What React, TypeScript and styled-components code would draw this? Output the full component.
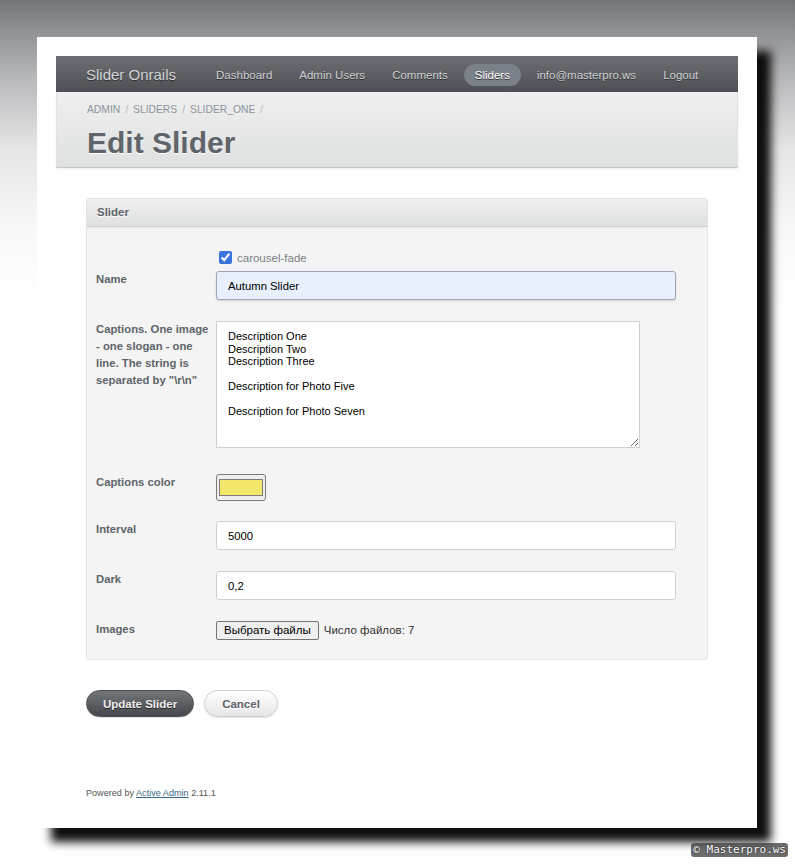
import React from "react";
import styled, { createGlobalStyle } from "styled-components";

const GlobalStyle = createGlobalStyle`
  html, body { margin: 0; padding: 0; }
  body {
    width: 795px;
    height: 866px;
    overflow: hidden;
    font-family: "Liberation Sans", Arial, sans-serif;
    background: linear-gradient(to bottom, #727479 0px, #8e9094 30px, #b9babc 80px, #e6e6e7 150px, #f7f7f7 220px, #ffffff 300px);
  }
`;

const Stage = styled.div`
  position: relative;
  width: 795px;
  height: 866px;
  padding: 37px 0 0 37px;
  box-sizing: border-box;
`;

const Card = styled.div`
  width: 720px;
  height: 791px;
  background: #fff;
  box-sizing: border-box;
  padding: 19px 19px 0;
  box-shadow: 14px 14px 9px 0 rgba(8, 8, 8, 0.97);
  display: flex;
  flex-direction: column;
`;

const HeaderBar = styled.div`
  height: 36px;
  background: linear-gradient(to bottom, #6c6e73, #4e5055);
  display: flex;
  align-items: center;
  padding: 1px 0 0 30px;
  box-sizing: border-box;
`;

const SiteTitle = styled.div`
  font-size: 15px;
  color: #d4d6d8;
  text-shadow: 0 1px 0 #2e3033;
  margin-right: 29px;
`;

const Nav = styled.nav`
  display: flex;
  gap: 5px;
`;

const NavItem = styled.a<{ $active?: boolean }>`
  font-size: 11.5px;
  padding: 0 11px;
  height: 22px;
  line-height: 22px;
  border-radius: 11px;
  color: ${(p) => (p.$active ? "#ffffff" : "#d2d4d6")};
  background: ${(p) => (p.$active ? "#7b8189" : "transparent")};
  text-shadow: 0 1px 0 #2e3033;
  text-decoration: none;
`;

const TitleBar = styled.div`
  height: 76px;
  background: linear-gradient(to bottom, #efefef, #dfe1e2);
  border-bottom: 1px solid #c4c6c8;
  border-left: 1px solid #e2e2e2;
  border-right: 1px solid #e2e2e2;
  box-shadow: 0 1px 2px rgba(0, 0, 0, 0.08);
  padding: 11px 0 0 30px;
  box-sizing: border-box;
`;

const Breadcrumbs = styled.div`
  font-size: 10.3px;
  color: #8a949e;
  display: flex;
  gap: 5px;
  line-height: 14px;
`;

const Crumb = styled.span`
  color: #8a949e;
`;

const Sep = styled.span`
  color: #b0b6bb;
`;

const PageTitle = styled.h2`
  margin: 8px 0 0;
  font-size: 30px;
  font-weight: bold;
  color: #5e6469;
  line-height: 36px;
  text-shadow: 0 1px 0 #fff;
`;

const Main = styled.main`
  padding: 30px 30px 0;
`;

const Panel = styled.section`
  width: 622px;
  background: #f4f4f4;
  border: 1px solid #e6e6e6;
  border-radius: 3px;
  box-sizing: border-box;
`;

const PanelHeader = styled.h3`
  margin: 0;
  height: 27px;
  line-height: 27px;
  padding-left: 10px;
  font-size: 11.5px;
  font-weight: bold;
  color: #5e6469;
  background: linear-gradient(to bottom, #efefef, #dfe1e2);
  border-bottom: 1px solid #cdcfd1;
  box-shadow: 0 1px 2px rgba(0, 0, 0, 0.06);
  text-shadow: 0 1px 0 #fff;
`;

const PanelBody = styled.div`
  padding: 22px 9px 20px;
  display: flex;
  flex-direction: column;
`;

const Row = styled.div<{ $mt?: number }>`
  display: grid;
  grid-template-columns: 120px 460px;
  margin-top: ${(p) => p.$mt ?? 0}px;
  align-items: start;
`;

const Label = styled.label`
  font-size: 11.3px;
  font-weight: bold;
  color: #5e6469;
  line-height: 17px;
  padding-right: 4px;
`;

const CheckLine = styled.label`
  display: flex;
  align-items: center;
  gap: 5px;
  font-size: 11.5px;
  color: #7b7f83;
  height: 17px;
  margin-left: 3px;
`;

const Check = styled.input`
  margin: 0;
  width: 13px;
  height: 13px;
  accent-color: #3b74dc;
`;

const TextInput = styled.input<{ $filled?: boolean }>`
  width: 460px;
  height: 29px;
  box-sizing: border-box;
  padding: 0 11px;
  font-family: "Liberation Sans", Arial, sans-serif;
  font-size: 11.3px;
  color: #000;
  border-radius: 3px;
  outline: none;
  border: 1px solid ${(p) => (p.$filled ? "#9ea6b4" : "#cdd1d6")};
  background: ${(p) => (p.$filled ? "#e8f0fe" : "#ffffff")};
  box-shadow: ${(p) => (p.$filled ? "0 1px 2px rgba(0,0,0,0.15)" : "none")};
  display: block;
`;

const TextArea = styled.textarea`
  width: 424px;
  height: 127px;
  box-sizing: border-box;
  padding: 8px 11px;
  font-family: "Liberation Sans", Arial, sans-serif;
  font-size: 11px;
  line-height: 12.5px;
  color: #000;
  border: 1px solid #cdd1d6;
  border-radius: 0;
  background: #fff;
  display: block;
  outline: none;
`;

const ColorButton = styled.div`
  width: 50px;
  height: 27px;
  box-sizing: border-box;
  border: 1px solid #7a7a7a;
  border-radius: 3px;
  background: #efefef;
  padding: 4px 2px;
  display: flex;
`;

const Swatch = styled.span<{ $color: string }>`
  flex: 1;
  background: ${(p) => p.$color};
  border: 1px solid #7a7a7a;
`;

const FileLine = styled.div`
  display: flex;
  align-items: center;
  gap: 5px;
  font-size: 11.5px;
  color: #333;
  height: 18px;
`;

const FileButton = styled.button`
  height: 19px;
  padding: 0 7px;
  font-family: "Liberation Sans", Arial, sans-serif;
  font-size: 11.5px;
  color: #000;
  background: #efefef;
  border: 1px solid #767676;
  border-radius: 2px;
`;

const Actions = styled.div`
  display: flex;
  gap: 10px;
  margin-top: 30px;
`;

const Button = styled.button<{ $primary?: boolean }>`
  height: 27px;
  border-radius: 14px;
  font-family: "Liberation Sans", Arial, sans-serif;
  font-size: 11.5px;
  font-weight: bold;
  padding: 0 ${(p) => (p.$primary ? 16 : 17)}px;
  color: ${(p) => (p.$primary ? "#f0f0f0" : "#5e6469")};
  background: ${(p) =>
    p.$primary
      ? "linear-gradient(to bottom, #73767b, #45484c)"
      : "linear-gradient(to bottom, #ffffff, #e6e6e6)"};
  border: 1px solid ${(p) => (p.$primary ? "#4a4d51" : "#d0d0d0")};
  text-shadow: ${(p) => (p.$primary ? "0 1px 0 #222" : "0 1px 0 #fff")};
  box-shadow: 0 1px 1px rgba(0, 0, 0, 0.12);
`;

const Footer = styled.footer`
  margin-top: 71px;
  padding-left: 30px;
  font-size: 9.1px;
  color: #555;
`;

const FooterLink = styled.a`
  color: #38678b;
  text-decoration: underline;
`;

const Watermark = styled.div`
  position: absolute;
  right: 7px;
  bottom: 9px;
  font-family: "DejaVu Sans Mono", monospace;
  font-size: 11px;
  color: #fff;
  background: rgba(60, 60, 60, 0.75);
  padding: 0 2px;
  border-radius: 3px;
  line-height: 14px;
  text-shadow: 0 0 2px #000;
`;

export default function App() {
  return (
    <Stage>
      <GlobalStyle />
      <Card>
        <HeaderBar>
          <SiteTitle>Slider Onrails</SiteTitle>
          <Nav>
            <NavItem>Dashboard</NavItem>
            <NavItem>Admin Users</NavItem>
            <NavItem>Comments</NavItem>
            <NavItem $active>Sliders</NavItem>
            <NavItem>info@masterpro.ws</NavItem>
            <NavItem>Logout</NavItem>
          </Nav>
        </HeaderBar>
        <TitleBar>
          <Breadcrumbs>
            <Crumb>ADMIN</Crumb>
            <Sep>/</Sep>
            <Crumb>SLIDERS</Crumb>
            <Sep>/</Sep>
            <Crumb>SLIDER_ONE</Crumb>
            <Sep>/</Sep>
          </Breadcrumbs>
          <PageTitle>Edit Slider</PageTitle>
        </TitleBar>
        <Main>
          <Panel>
            <PanelHeader>Slider</PanelHeader>
            <PanelBody>
              <Row>
                <span />
                <CheckLine>
                  <Check type="checkbox" defaultChecked />
                  carousel-fade
                </CheckLine>
              </Row>
              <Row $mt={5}>
                <Label>Name</Label>
                <TextInput $filled defaultValue="Autumn Slider" />
              </Row>
              <Row $mt={21}>
                <Label>
                  Captions. One image - one slogan - one line. The string is separated by "\r\n"
                </Label>
                <TextArea
                  defaultValue={
                    "Description One\nDescription Two\nDescription Three\n\nDescription for Photo Five\n\nDescription for Photo Seven"
                  }
                />
              </Row>
              <Row $mt={26}>
                <Label>Captions color</Label>
                <ColorButton>
                  <Swatch $color="#f2e66c" />
                </ColorButton>
              </Row>
              <Row $mt={20}>
                <Label>Interval</Label>
                <TextInput defaultValue="5000" />
              </Row>
              <Row $mt={21}>
                <Label>Dark</Label>
                <TextInput defaultValue="0,2" />
              </Row>
              <Row $mt={21}>
                <Label>Images</Label>
                <FileLine>
                  <FileButton>Выбрать файлы</FileButton>
                  Число файлов: 7
                </FileLine>
              </Row>
            </PanelBody>
          </Panel>
          <Actions>
            <Button $primary>Update Slider</Button>
            <Button>Cancel</Button>
          </Actions>
        </Main>
        <Footer>
          Powered by <FooterLink>Active Admin</FooterLink> 2.11.1
        </Footer>
      </Card>
      <Watermark>© Masterpro.ws</Watermark>
    </Stage>
  );
}
